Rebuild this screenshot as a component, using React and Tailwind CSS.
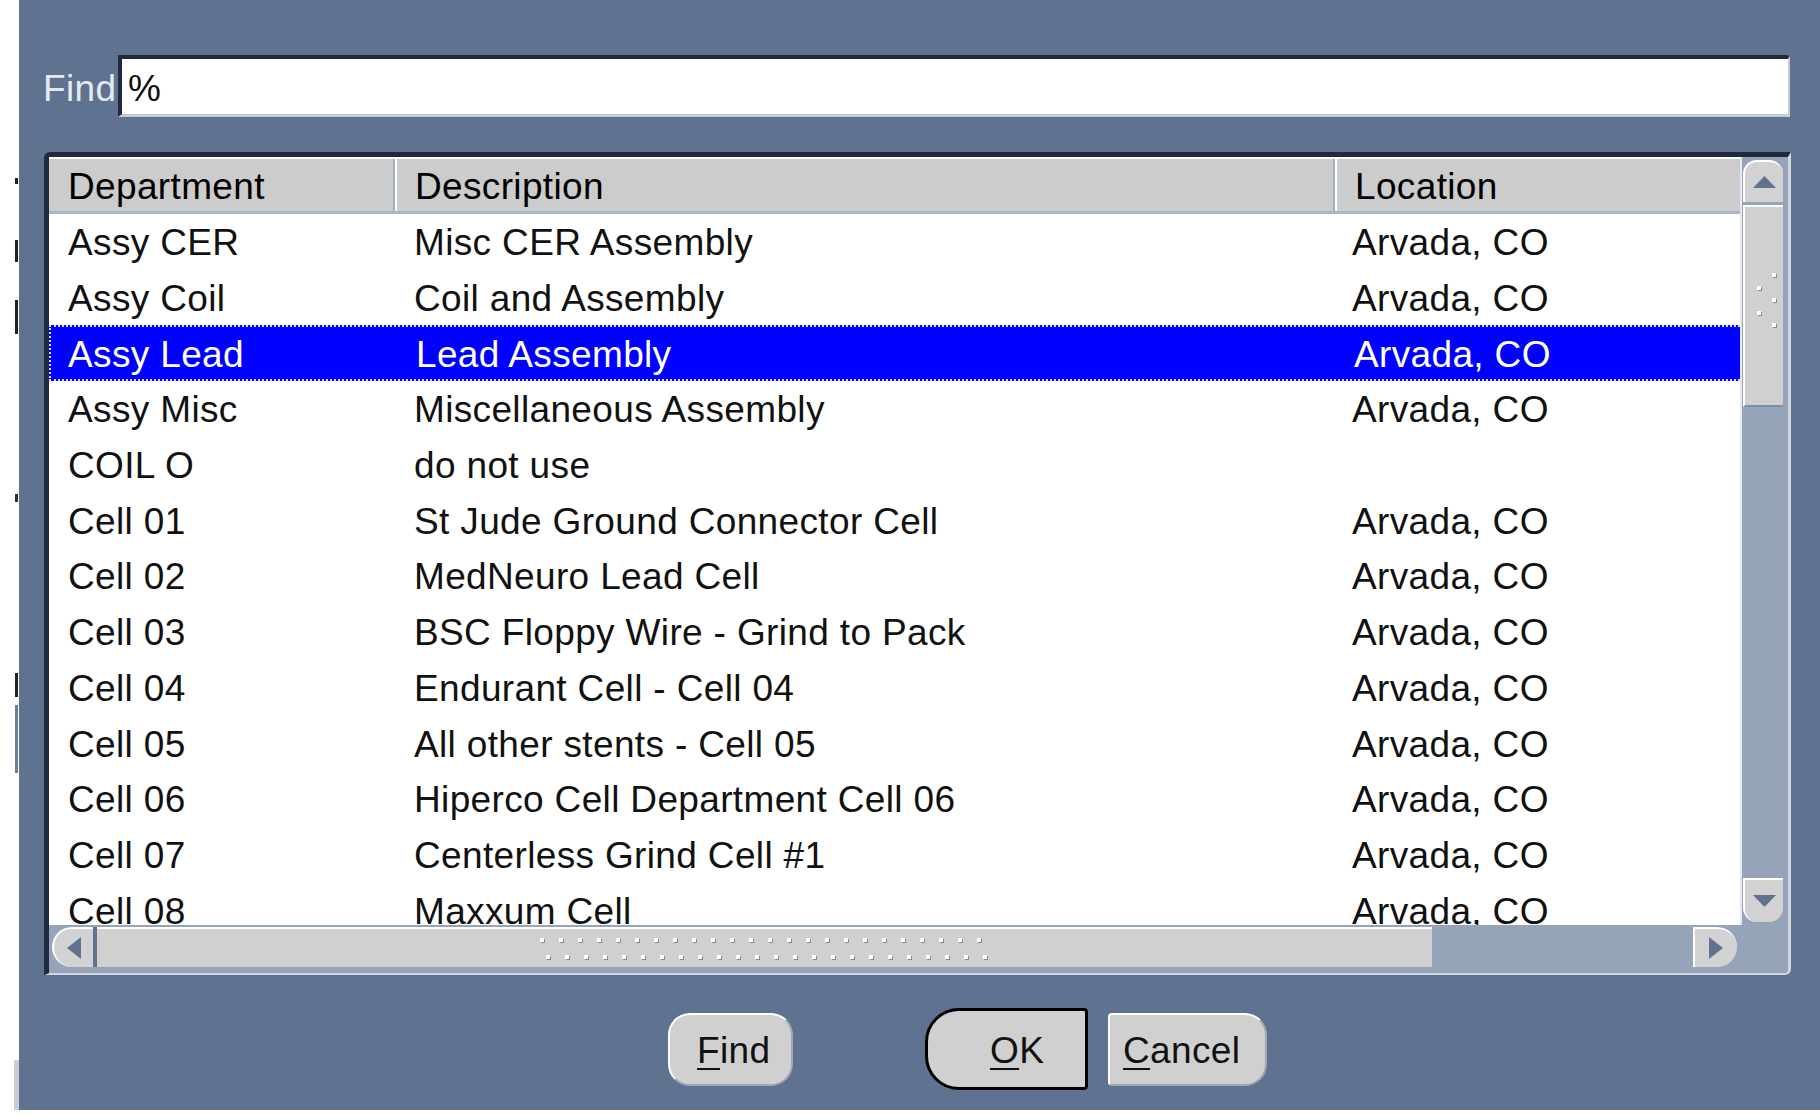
import React from "react";

const rows = [
    ["Assy CER", "Misc CER Assembly", "Arvada, CO"],
    ["Assy Coil", "Coil and Assembly", "Arvada, CO"],
    ["Assy Lead", "Lead Assembly", "Arvada, CO"],
    ["Assy Misc", "Miscellaneous Assembly", "Arvada, CO"],
    ["COIL O", "do not use", ""],
    ["Cell 01", "St Jude Ground Connector Cell", "Arvada, CO"],
    ["Cell 02", "MedNeuro Lead Cell", "Arvada, CO"],
    ["Cell 03", "BSC Floppy Wire - Grind to Pack", "Arvada, CO"],
    ["Cell 04", "Endurant Cell - Cell 04", "Arvada, CO"],
    ["Cell 05", "All other stents - Cell 05", "Arvada, CO"],
    ["Cell 06", "Hiperco Cell Department Cell 06", "Arvada, CO"],
    ["Cell 07", "Centerless Grind Cell #1", "Arvada, CO"],
    ["Cell 08", "Maxxum Cell", "Arvada, CO"],
];

const SELECTED = 2;

function Dot() {
    return <div className="w-[4px] h-[4px] bg-white shadow-[1px_1px_0_#8a8a8a]" />;
}

function Arrow({ dir }) {
    // little filled triangles of the scroll buttons
    if (dir === "up")
        return (
            <svg width="23" height="12" viewBox="0 0 23 12">
                <polygon points="11.5,0 23,12 0,12" fill="#5f7391" />
            </svg>
        );
    if (dir === "down")
        return (
            <svg width="23" height="12" viewBox="0 0 23 12">
                <polygon points="0,0 23,0 11.5,12" fill="#5f7391" />
            </svg>
        );
    if (dir === "left")
        return (
            <svg width="14" height="22" viewBox="0 0 14 22">
                <polygon points="14,0 14,22 0,11" fill="#5f7391" />
            </svg>
        );
    return (
        <svg width="14" height="22" viewBox="0 0 14 22">
            <polygon points="0,0 14,11 0,22" fill="#5f7391" />
        </svg>
    );
}

function LeftStrip() {
    return (
        <div className="w-[19px] h-[1120px] flex flex-col">
            <div className="h-[178px]" />
            <div className="h-[6px] w-[3px] ml-[15px] bg-[#222]" />
            <div className="h-[56px]" />
            <div className="h-[22px] w-[3px] ml-[15px] bg-[#222]" />
            <div className="h-[38px]" />
            <div className="h-[34px] w-[3px] ml-[15px] bg-[#222]" />
            <div className="h-[160px]" />
            <div className="h-[8px] w-[3px] ml-[15px] bg-[#333]" />
            <div className="h-[171px]" />
            <div className="h-[24px] w-[3px] ml-[15px] bg-[#222]" />
            <div className="h-[8px]" />
            <div className="h-[68px] w-[3px] ml-[15px] bg-[#6a7e9c]" />
            <div className="h-[287px]" />
            <div className="h-[50px] w-[5px] ml-[14px] bg-[#c9ced6]" />
        </div>
    );
}

function VScroll() {
    return (
        <div className="w-[48px] h-full flex flex-col border-l-2 border-[#e6eaf0] bg-[#96a4ba]">
            <div className="mt-[3px] ml-[1px] w-[40px] h-[42px] rounded-t-[14px] bg-[#d2d2d2] border-t-2 border-l-2 border-white flex items-center justify-center">
                <Arrow dir="up" />
            </div>
            <div className="mt-[3px] ml-[1px] w-[40px] h-[202px] bg-[#d0d0d0] border-t-2 border-l-2 border-white border-b-2 border-b-[#7f8ea6] flex flex-col">
                <div className="h-[66px]" />
                <div className="h-[12.5px] pl-[27px]"><Dot /></div>
                <div className="h-[12.5px] pl-[12px]"><Dot /></div>
                <div className="h-[12.5px] pl-[27px]"><Dot /></div>
                <div className="h-[12.5px] pl-[12px]"><Dot /></div>
                <div className="h-[12.5px] pl-[27px]"><Dot /></div>
            </div>
            <div className="mt-auto mb-[3px] ml-[1px] w-[40px] h-[44px] rounded-b-[14px] bg-[#d2d2d2] border-t-2 border-l-2 border-white flex items-center justify-center">
                <Arrow dir="down" />
            </div>
        </div>
    );
}

function HScroll() {
    const pairs = Array.from({ length: 24 });
    return (
        <div className="h-[48px] flex items-start pt-[2px] bg-[#96a4ba]">
            <div className="ml-[3px] w-[41px] h-[40px] rounded-l-[20px] bg-[#d2d2d2] border-t-2 border-l-2 border-white flex items-center justify-center">
                <Arrow dir="left" />
            </div>
            <div className="w-[4px] h-[40px] bg-[#5f7391]" />
            <div className="w-[1335px] h-[40px] bg-[#d0d0d0] border-t-2 border-white flex pl-[443px] pt-[9px]">
                {pairs.map((_, i) => (
                    <div key={i} className="w-[19px] flex flex-col">
                        <Dot />
                        <div className="h-[13px]" />
                        <div className="ml-[6px]">
                            <Dot />
                        </div>
                    </div>
                ))}
            </div>
            <div className="w-[261px]" />
            <div className="w-[44px] h-[40px] rounded-r-[20px] bg-[#d2d2d2] border-t-2 border-l-2 border-white flex items-center justify-center">
                <Arrow dir="right" />
            </div>
        </div>
    );
}

function Table() {
    return (
        <div className="w-[1691px] h-full bg-white flex flex-col">
            <div className="h-[57px] grid grid-cols-[346px_940px_405px] bg-[#cccccc] border-t-2 border-white border-b-[3px] border-b-[#a8b6ca]">
                <div className="pl-[19px] pt-[3px] flex items-center border-r-2 border-[#9fb0c4]">Department</div>
                <div className="pl-[18px] pt-[3px] flex items-center border-l-2 border-r-2 border-l-white border-r-[#9fb0c4]">
                    Description
                </div>
                <div className="pl-[18px] pt-[3px] flex items-center border-l-2 border-white">Location</div>
            </div>
            <div className="h-[711px] overflow-hidden">
                {rows.map((r, i) =>
                    i === SELECTED ? (
                        <div
                            key={i}
                            className="h-[55.7px] grid grid-cols-[346px_940px_405px] bg-[#0000ff] text-white border-y-2 border-l-2 border-dotted border-[#dcdcff]"
                        >
                            <div className="pl-[17px] pt-[2px] flex items-center whitespace-nowrap">{r[0]}</div>
                            <div className="pl-[19px] pt-[2px] flex items-center whitespace-nowrap">{r[1]}</div>
                            <div className="pl-[17px] pt-[2px] flex items-center whitespace-nowrap">{r[2]}</div>
                        </div>
                    ) : (
                        <div key={i} className="h-[55.7px] grid grid-cols-[346px_940px_405px] text-[#111]">
                            <div className="pl-[19px] pt-[2px] flex items-center whitespace-nowrap">{r[0]}</div>
                            <div className="pl-[19px] pt-[2px] flex items-center whitespace-nowrap">{r[1]}</div>
                            <div className="pl-[17px] pt-[2px] flex items-center whitespace-nowrap">{r[2]}</div>
                        </div>
                    )
                )}
            </div>
        </div>
    );
}

export default function App() {
    return (
        <div className="w-[1820px] h-[1120px] bg-white flex overflow-hidden font-['Liberation_Sans',Arial,sans-serif] text-[37px] tracking-[0.35px] leading-none">
            <LeftStrip />
            <div className="w-[1801px] h-[1110px] bg-[#5f7391] flex flex-col">
                <div className="mt-[55px] h-[62px] flex items-center">
                    <div className="ml-[24px] w-[75px] pt-[4px] text-[#e4e9f0]">Find</div>
                    <div className="w-[1672px] h-[62px] bg-white border-t-4 border-l-4 border-[#1f2a3d] border-r-2 border-b-[3px] border-r-[#c3ccd8] border-b-[#c3ccd8] rounded-tr-[4px] flex items-center pl-[6px] pt-[3px] text-[#111]">
                        %
                    </div>
                </div>

                <div className="mt-[35px] ml-[25px] w-[1747px] h-[823px] border-t-[5px] border-l-[5px] border-[#1f2a3d] border-r-[3px] border-b-2 border-r-[#cfd6e0] border-b-[#cfd6e0] rounded-tl-[6px] rounded-br-[6px] bg-[#96a4ba] flex flex-col overflow-hidden">
                    <div className="h-[768px] flex">
                        <Table />
                        <VScroll />
                    </div>
                    <HScroll />
                </div>

                <div className="mt-[33px] h-[82px] flex items-center text-[#111]">
                    <div className="ml-[649px] w-[125px] h-[73px] rounded-[22px] bg-[#d0d0d0] border-2 border-t-white border-l-white border-r-[#a2a8b2] border-b-[#a2a8b2] flex items-center pl-[27px] pt-[2px]">
                        <span className="underline decoration-2 underline-offset-[5px]">F</span>ind
                    </div>
                    <div className="ml-[132px] w-[163px] h-[82px] rounded-l-[34px] rounded-r-[4px] bg-[#d0d0d0] border-[3px] border-black flex items-center pl-[62px] pt-[2px]">
                        <span className="underline decoration-2 underline-offset-[5px]">O</span>K
                    </div>
                    <div className="ml-[20px] w-[159px] h-[73px] rounded-l-[4px] rounded-r-[22px] bg-[#d0d0d0] border-2 border-t-white border-l-white border-r-[#a2a8b2] border-b-[#a2a8b2] flex items-center pl-[13px] pt-[2px]">
                        <span className="underline decoration-2 underline-offset-[5px]">C</span>ancel
                    </div>
                </div>
            </div>
        </div>
    );
}
